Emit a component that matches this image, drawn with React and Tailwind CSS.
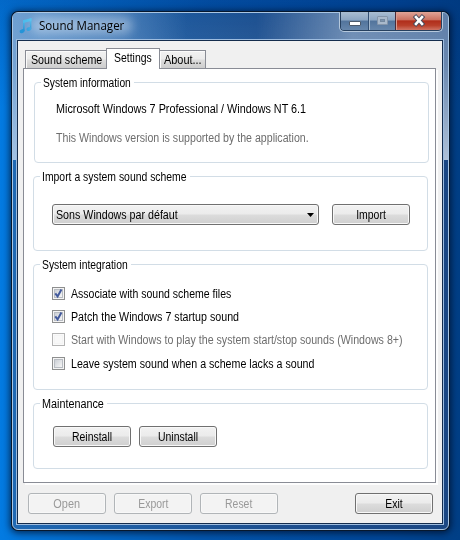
import React from 'react';

function Label({ children, scale, origin = 'origin-left', className = '' }) {
  return (
    <span className={`block whitespace-nowrap text-[12px] leading-[14px] ${origin} ${scale} ${className}`}>
      {children}
    </span>
  );
}

function Button({ children, scale, disabled }) {
  const look = disabled
    ? 'border-[#b1b5b8] bg-[#f3f3f3] text-[#999999] shadow-[inset_0_0_0_1px_#f8f8f8]'
    : 'border-[#707070] bg-[linear-gradient(180deg,#f2f2f2_0%,#ebebeb_48%,#dcdcdc_52%,#cfcfcf_100%)] text-black shadow-[inset_0_0_0_1px_#f8f8f8]';
  return (
    <button className={`flex h-[21px] w-[78px] shrink-0 items-center justify-center rounded-[3px] border ${look}`}>
      <Label origin="origin-center" scale={scale}>{children}</Label>
    </button>
  );
}

function Group({ title, scale, legend, className, children }) {
  return (
    <fieldset className={`w-[395px] min-w-0 rounded-[4px] border border-[#d2dde6] ${className}`}>
      <legend className={`flex h-[13px] items-center ${legend}`}>
        <Label scale={scale}>{title}</Label>
      </legend>
      {children}
    </fieldset>
  );
}

function Check({ checked, disabled, scale, children }) {
  return (
    <label className={`flex h-[13px] items-center ${disabled ? 'text-[#6d6d6d]' : 'text-black'}`}>
      <span className={`mr-[6px] block size-[13px] shrink-0 border p-px ${disabled ? 'border-[#b4b4b4] bg-[#fafafa]' : 'border-[#8e8f8f] bg-[#f4f4f4]'}`}>
        <span className={`block size-[9px] border ${disabled ? 'border-[#f4f4f4] bg-[#f8f8f8]' : 'border-[#b8bcc2] bg-[linear-gradient(135deg,#cbcfd5,#f6f6f6)]'}`}>
          {checked && (
            <svg viewBox="0 0 9 9" className="-ml-px -mt-px size-[9px] overflow-visible">
              <path d="M1.3 4.4 L3.6 7.4 L7.4 0.6" fill="none" stroke="#42599c" strokeWidth="2" />
            </svg>
          )}
        </span>
      </span>
      <Label scale={scale}>{children}</Label>
    </label>
  );
}

function Tab({ children, scale, className }) {
  return (
    <div className={`h-[18px] shrink-0 border border-b-0 border-[#898c95] bg-[linear-gradient(180deg,#f2f2f2_0%,#ebebeb_48%,#dddddd_52%,#cdcdcd_100%)] pt-[2px] shadow-[inset_1px_1px_0_#fbfbfb] ${className}`}>
      <Label scale={scale}>{children}</Label>
    </div>
  );
}

function MusicNote() {
  return (
    <svg viewBox="0 0 16 18" className="h-[18px] w-[16px] shrink-0">
      <defs>
        <linearGradient id="note" x1="0" y1="0" x2="0" y2="1">
          <stop offset="0" stopColor="#4fc0ee" />
          <stop offset="1" stopColor="#1d8fd4" />
        </linearGradient>
      </defs>
      <rect x="4.1" y="3" width="1.5" height="11" fill="url(#note)" />
      <rect x="10.9" y="1.4" width="1.5" height="10.4" fill="url(#note)" />
      <path d="M4.1 3.2 L12.4 1 V3.9 L4.1 6.1 Z" fill="#4bbcec" />
      <ellipse cx="3.1" cy="14.2" rx="2.6" ry="1.9" fill="#2494d8" transform="rotate(-20 3.1 14.2)" />
      <ellipse cx="9.9" cy="12" rx="2.5" ry="1.9" fill="#2fa0de" transform="rotate(-20 9.9 12)" />
    </svg>
  );
}

function CaptionButtons() {
  const glass = 'bg-[linear-gradient(180deg,#a9bdd2_0%,#8ba5c2_45%,#52749c_50%,#6686ab_100%)]';
  return (
    <div className="-mt-px mr-[1px] flex h-[20px] w-[104px] overflow-hidden rounded-b-[5px] border border-t-0 border-[#b5c8dc] shadow-[inset_0_0_0_1px_#26405f]">
      <div className={`m-px mr-0 mt-0 flex w-[27px] items-start justify-center rounded-bl-[3px] ${glass}`}>
        <i className="mt-[9px] block h-[5px] w-[12px] rounded-[1px] border border-[#4c5a6c] bg-white" />
      </div>
      <div className={`mb-px flex w-[27px] items-start justify-center border-l border-[#324f73] shadow-[inset_1px_0_0_#a7bbd0] ${glass}`}>
        <i className="mt-[4px] block h-[9px] w-[11px] rounded-[1px] border border-[#8495aa] bg-[#a9b9cb] p-[2px]">
          <i className="block h-[3px] w-[5px] border border-[#73889f] bg-[#7c93ad]" />
        </i>
      </div>
      <div className="mb-px mr-px flex flex-1 items-start justify-center rounded-br-[3px] border-l border-[#4a2a38] bg-[linear-gradient(180deg,#dfa497_0%,#cb7362_42%,#b02e1b_50%,#b9402b_75%,#cf7464_100%)] shadow-[inset_1px_0_0_#d99c90]">
        <svg viewBox="0 0 12 11" className="mt-[3px] h-[11px] w-[12px] overflow-visible">
          <path d="M3 2.2 L9 8.8 M9 2.2 L3 8.8" stroke="#4b4a5b" strokeWidth="4.6" strokeLinecap="square" />
          <path d="M3 2.2 L9 8.8 M9 2.2 L3 8.8" stroke="#ffffff" strokeWidth="2.6" strokeLinecap="square" />
        </svg>
      </div>
    </div>
  );
}

export default function App() {
  return (
    <div className="h-[540px] w-[460px] overflow-hidden bg-[linear-gradient(180deg,rgba(0,40,110,0.22)_0%,rgba(0,40,110,0)_20%),linear-gradient(90deg,#037be2_0%,#0375da_5%,#0355ad_45%,#004697_85%,#003f86_100%)] pl-[11px] pt-[11px] font-['Liberation_Sans',Arial,sans-serif] text-black">
      <div className="h-[520px] w-[439px] rounded-[7px] bg-[#07182d] p-px shadow-[0_1px_7px_1px_rgba(0,8,28,0.7)]">
        <div className="h-[518px] rounded-[6px] border border-[#a9c6e4] bg-[linear-gradient(90deg,#1f69b4_0%,#1d4f8f_60%,#1b4783_100%)]">
          <div className="h-full rounded-[5px] bg-[linear-gradient(90deg,rgba(160,193,228,0.62)_0%,rgba(150,183,220,0.42)_22%,rgba(120,160,205,0)_40%,rgba(120,160,205,0)_56%,rgba(190,205,222,0.5)_78%,rgba(190,205,222,0.42)_100%),linear-gradient(180deg,rgba(255,255,255,0)_0%,rgba(255,255,255,0.08)_35%,rgba(235,243,251,0.66)_100%)] bg-[length:100%_147px] bg-no-repeat pb-[4px] pl-[3px] pr-[4px]">
            <div className="flex h-[26px] items-start justify-between">
              <div className="flex pl-[3px] pt-[4px]">
                <MusicNote />
                <div className="relative ml-[4px] w-[90px]">
                  <div className="absolute -left-[8px] top-0 h-[17px] w-[102px] rounded-full bg-white/35 blur-[5px]" />
                  <span className="relative block origin-left scale-x-[.963] whitespace-nowrap font-['Open_Sans','Noto_Sans',sans-serif] text-[12px] leading-[17px] text-black">Sound Manager</span>
                </div>
              </div>
              <CaptionButtons />
            </div>
            <div className="h-[486px] border border-[#9dbcdf]">
              <div className="h-[484px] border border-[#142c4c] bg-[#f0f0f0] pl-[5px] pt-[7px]">
                <div className="flex h-[20px] items-end pl-[2px]">
                  <Tab scale="scale-x-[.89]" className="w-[82px] pl-[5px]">Sound scheme</Tab>
                  <div className="relative z-10 -mb-px -ml-px h-[21px] w-[54px] border border-b-0 border-[#898c95] bg-white pl-[7px] pt-[2px]">
                    <Label scale="scale-x-[.87]">Settings</Label>
                  </div>
                  <Tab scale="scale-x-[.91]" className="w-[46px] border-l-0 pl-[4px]">About...</Tab>
                </div>
                <div className="h-[415px] w-[413px] border border-[#898c95] bg-white pt-[7px] shadow-[2px_2px_0_#fdfdfd]">
                  <Group title="System information" scale="scale-x-[.855]" legend="ml-[6px] w-[93px] pl-[2px]" className="ml-[10px] h-[87px]">
                    <div className="flex flex-col gap-[15px] pl-[21px] pt-[13px]">
                      <Label scale="scale-x-[.9]">Microsoft Windows 7 Professional / Windows NT 6.1</Label>
                      <Label scale="scale-x-[.885]" className="text-[#6d6d6d]">This Windows version is supported by the application.</Label>
                    </div>
                  </Group>
                  <Group title="Import a system sound scheme" scale="scale-x-[.867]" legend="ml-[6px] w-[150px] pl-[2px]" className="ml-[9px] mt-[7px] h-[81px]">
                    <div className="flex gap-[13px] pl-[18px] pt-[21px]">
                      <div className="flex h-[21px] w-[267px] items-center justify-between rounded-[3px] border border-[#707070] bg-[linear-gradient(180deg,#f2f2f2_0%,#ebebeb_48%,#dcdcdc_52%,#cfcfcf_100%)] pl-[3px] pr-[4px] shadow-[inset_0_0_0_1px_#f8f8f8]">
                        <Label scale="scale-x-[.89]">Sons Windows par défaut</Label>
                        <svg viewBox="0 0 7 4" className="h-[4px] w-[7px]"><path d="M0 0 H7 L3.5 4 Z" /></svg>
                      </div>
                      <Button scale="scale-x-[.87]">Import</Button>
                    </div>
                  </Group>
                  <Group title="System integration" scale="scale-x-[.862]" legend="ml-[6px] w-[91px] pl-[2px]" className="ml-[9px] mt-[7px] h-[132px]">
                    <div className="flex flex-col gap-[10px] pl-[18px] pt-[16px]">
                      <Check checked scale="scale-x-[.877]">Associate with sound scheme files</Check>
                      <Check checked scale="scale-x-[.89]">Patch the Windows 7 startup sound</Check>
                      <Check disabled scale="scale-x-[.887]">Start with Windows to play the system start/stop sounds (Windows 8+)</Check>
                      <div className="pt-px">
                        <Check scale="scale-x-[.888]">Leave system sound when a scheme lacks a sound</Check>
                      </div>
                    </div>
                  </Group>
                  <Group title="Maintenance" scale="scale-x-[.9]" legend="ml-[6px] w-[67px] pl-[2px]" className="ml-[9px] mt-[7px] h-[72px]">
                    <div className="flex gap-[8px] pl-[19px] pt-[16px]">
                      <Button scale="scale-x-[.87]">Reinstall</Button>
                      <Button scale="scale-x-[.87]">Uninstall</Button>
                    </div>
                  </Group>
                </div>
                <div className="mt-[10px] flex gap-[8px] pl-[5px] pr-[9px]">
                  <Button disabled scale="scale-x-[.91]">Open</Button>
                  <Button disabled scale="scale-x-[.87]">Export</Button>
                  <Button disabled scale="scale-x-[.87]">Reset</Button>
                  <div className="ml-auto"><Button scale="scale-x-[.87]">Exit</Button></div>
                </div>
              </div>
            </div>
          </div>
        </div>
      </div>
    </div>
  );
}
